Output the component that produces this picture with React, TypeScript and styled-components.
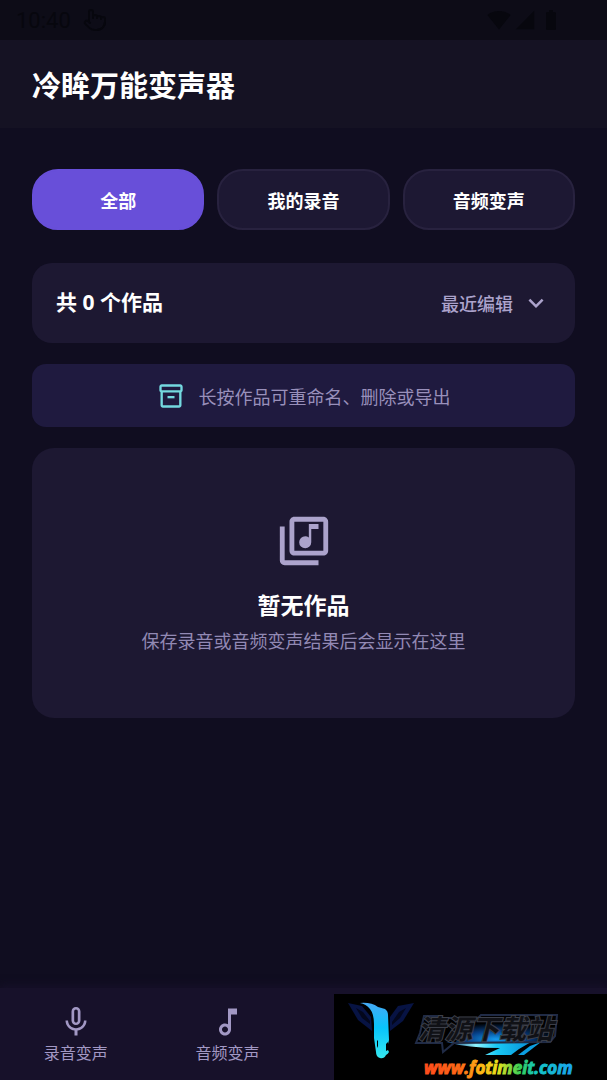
import { useState } from "react";
import styled, { createGlobalStyle } from "styled-components";
import {
  MdBatteryFull,
  MdKeyboardArrowDown,
  MdMicNone,
  MdOutlineAudiotrack,
  MdOutlineInventory2,
  MdOutlineLibraryMusic,
  MdSignalCellular4Bar,
  MdSignalWifi4Bar,
} from "react-icons/md";
import { Pointer } from "lucide-react";

const GlobalStyle = createGlobalStyle`
  * {
    box-sizing: border-box;
  }

  body {
    margin: 0;
    background: #100d20;
    color: #fff;
    font-family: "Noto Sans CJK SC", "Noto Sans", sans-serif;
  }

  button,
  select {
    font-family: inherit;
    cursor: pointer;
  }
`;

const StyledPage = styled.div`
  display: flex;
  flex-direction: column;
  min-height: 100vh;
`;

const StyledStatusBar = styled.div`
  display: flex;
  justify-content: space-between;
  align-items: center;
  height: 40px;
  padding: 0 44px 0 16px;
  background: #0d0c17;
  color: #07070e;
  font: 22px Roboto, sans-serif;
`;

const StyledStatusGroup = styled.div<{ $gap: number }>`
  display: flex;
  align-items: center;
  gap: ${({ $gap }) => $gap}px;
`;

const StyledHeader = styled.header`
  padding: 24px 32px;
  background: #151223;
`;

const StyledTitle = styled.h1`
  margin: 0;
  font-size: 29px;
  line-height: 40px;
  font-weight: 700;
`;

const StyledMain = styled.main`
  flex: 1;
  display: flex;
  flex-direction: column;
  gap: 21px;
  padding: 41px 32px 20px;
`;

const StyledTabs = styled.div`
  display: grid;
  grid-template-columns: repeat(3, 1fr);
  gap: 13px;
  margin-bottom: 12px;
`;

const StyledTab = styled.button<{ $active: boolean }>`
  height: 61px;
  border: 2px solid ${({ $active }) => ($active ? "#684fd9" : "#28223f")};
  border-radius: 26px;
  background: ${({ $active }) => ($active ? "#684fd9" : "#1d1833")};
  color: #fff;
  font-size: 18px;
  font-weight: 700;
`;

const StyledSummary = styled.section`
  display: flex;
  justify-content: space-between;
  align-items: center;
  height: 80px;
  padding: 0 24px;
  border-radius: 20px;
  background: #1d1832;
`;

const StyledCount = styled.h2`
  margin: 0;
  padding-bottom: 2px;
  font-family: "Noto Sans", "Noto Sans CJK SC", sans-serif;
  font-size: 21px;
  line-height: 28px;
  font-weight: 700;
`;

const StyledSort = styled.label`
  display: flex;
  align-items: center;
  gap: 8px;
  color: #aca3cc;
`;

const StyledSelect = styled.select`
  appearance: none;
  padding: 0;
  border: 0;
  background: transparent;
  color: inherit;
  font-size: 18px;
  line-height: 28px;
  font-weight: 500;
`;

const StyledHint = styled.section`
  display: flex;
  justify-content: center;
  align-items: center;
  gap: 14px;
  height: 63px;
  border-radius: 14px;
  background: #1f1a3f;
  color: #9990bb;
  font-size: 18px;
  line-height: 28px;

  svg {
    color: #74d9e0;
  }
`;

const StyledEmpty = styled.section`
  display: flex;
  flex-direction: column;
  align-items: center;
  padding: 64px 20px;
  border-radius: 22px;
  background: #1d1832;
  color: #9289b4;
  font-size: 18px;
  line-height: 28px;

  svg {
    color: #aca3cc;
  }

  h2 {
    margin: 16px 0 4px;
    color: #fff;
    font-size: 23px;
    line-height: 36px;
    font-weight: 700;
  }

  p {
    margin: 0;
  }
`;

const StyledNav = styled.nav`
  display: grid;
  grid-template-columns: repeat(4, 1fr);
  height: 92px;
  background: #17112a;
  box-shadow: 0 -2px 8px #17112a;
`;

const StyledNavItem = styled.button`
  display: flex;
  flex-direction: column;
  align-items: center;
  padding: 16px 0 0;
  border: 0;
  background: transparent;
  color: #a298c4;
  font-size: 16px;
  line-height: 24px;
`;

const StyledStamp = styled.div`
  position: fixed;
  right: 0;
  bottom: 0;
  width: 273px;
  height: 86px;
  background: #000;

  svg {
    display: block;
  }
`;

const tabs = ["全部", "我的录音", "音频变声"];

function SiteLogo() {
  return (
    <svg width="273" height="86" viewBox="0 0 273 86" role="img" aria-label="清源下载站">
      <defs>
        <linearGradient id="beam" x1="0" y1="0" x2="0" y2="1">
          <stop offset="0" stopColor="#45a9f5" />
          <stop offset="0.45" stopColor="#08c4fa" />
          <stop offset="1" stopColor="#35e8f0" />
        </linearGradient>
        <linearGradient id="swoosh" x1="0" y1="0" x2="1" y2="0">
          <stop offset="0" stopColor="#0a2d6b" />
          <stop offset="0.35" stopColor="#8ff4ff" />
          <stop offset="0.6" stopColor="#18c8f4" />
          <stop offset="1" stopColor="#0890d8" />
        </linearGradient>
        <radialGradient id="glow" cx="0.4" cy="0.9" r="0.6">
          <stop offset="0" stopColor="#159cf0" />
          <stop offset="0.5" stopColor="#063f86" />
          <stop offset="1" stopColor="#000" />
        </radialGradient>
        <linearGradient id="rainbow" gradientUnits="userSpaceOnUse" x1="90" y1="0" x2="238" y2="0">
          <stop offset="0" stopColor="#ff4a1c" />
          <stop offset="0.25" stopColor="#ff6a16" />
          <stop offset="0.38" stopColor="#ffb414" />
          <stop offset="0.5" stopColor="#e8e21c" />
          <stop offset="0.65" stopColor="#35cf58" />
          <stop offset="0.76" stopColor="#12c4c4" />
          <stop offset="1" stopColor="#1aa4f0" />
        </linearGradient>
      </defs>
      <path d="M14 9 28 12 37 23 38 37 24 26Z" fill="#071343" />
      <path d="M80 9 64 12 56 23V37L69 27Z" fill="#071343" />
      <path d="M22 14 29 18 36 27V30L28 24ZM72 14 65 18 58 28V31L66 24Z" fill="#03071c" />
      <path
        d="M26 9Q37 8 44 13L51 15Q54 17 54 21L55 46 54 50V56L55 58Q54 60 52 61Q50 65 46 64Q42 63 42 58L40 44V30Q40 20 36 15Q32 10 26 9Z"
        fill="url(#beam)"
      />
      <path d="M43 47 44 46V54L43 52ZM52 50 54 48V56L52 57Z" fill="#000" />
      <path d="M134 21H222L216 48H122Z" fill="url(#glow)" />
      <path d="M112 48H197L185 55 177 61H151L166 54Q134 54 112 48Z" fill="url(#swoosh)" />
      <path d="M196 52 207 48 190 61H184Z" fill="#0c9ee0" />
      <path
        d="M90 22H107L109 24H144L147 21H223L221 42 216 48 120 49 109 58 108 49H82L86 39Z"
        fill="none"
        stroke="#202b46"
        strokeWidth="2"
      />
      <text
        x="84"
        y="45"
        fill="#101116"
        stroke="#3c3f49"
        strokeWidth="2"
        paintOrder="stroke"
        fontFamily="'Noto Sans CJK SC', sans-serif"
        fontSize="27"
        fontStyle="italic"
        fontWeight="700"
      >
        清源下载站
      </text>
      <text
        x="90"
        y="80"
        fill="url(#rainbow)"
        stroke="url(#rainbow)"
        strokeWidth="1"
        fontFamily="'Open Sans', sans-serif"
        fontSize="17"
        fontStyle="italic"
        fontWeight="700"
      >
        www.fotimeit.com
      </text>
    </svg>
  );
}

function App() {
  const [activeTab, setActiveTab] = useState(tabs[0]);

  return (
    <>
      <GlobalStyle />
      <StyledPage>
        <StyledStatusBar>
          <StyledStatusGroup $gap={12}>
            <span>10:40</span>
            <Pointer size={24} />
          </StyledStatusGroup>
          <StyledStatusGroup $gap={3}>
            <MdSignalWifi4Bar size={24} />
            <MdSignalCellular4Bar size={22} />
            <MdBatteryFull size={24} />
          </StyledStatusGroup>
        </StyledStatusBar>
        <StyledHeader>
          <StyledTitle>冷眸万能变声器</StyledTitle>
        </StyledHeader>
        <StyledMain>
          <StyledTabs>
            {tabs.map((tab) => (
              <StyledTab
                key={tab}
                type="button"
                $active={tab === activeTab}
                aria-pressed={tab === activeTab}
                onClick={() => setActiveTab(tab)}
              >
                {tab}
              </StyledTab>
            ))}
          </StyledTabs>
          <StyledSummary>
            <StyledCount>共 0 个作品</StyledCount>
            <StyledSort htmlFor="sort">
              <StyledSelect id="sort">
                <option>最近编辑</option>
              </StyledSelect>
              <MdKeyboardArrowDown size={30} />
            </StyledSort>
          </StyledSummary>
          <StyledHint>
            <MdOutlineInventory2 size={28} />
            <span>长按作品可重命名、删除或导出</span>
          </StyledHint>
          <StyledEmpty>
            <MdOutlineLibraryMusic size={58} />
            <h2>暂无作品</h2>
            <p>保存录音或音频变声结果后会显示在这里</p>
          </StyledEmpty>
        </StyledMain>
        <StyledNav>
          <StyledNavItem type="button">
            <MdMicNone size={36} />
            录音变声
          </StyledNavItem>
          <StyledNavItem type="button">
            <MdOutlineAudiotrack size={36} />
            音频变声
          </StyledNavItem>
        </StyledNav>
      </StyledPage>
      <StyledStamp>
        <SiteLogo />
      </StyledStamp>
    </>
  );
}

export default App;
